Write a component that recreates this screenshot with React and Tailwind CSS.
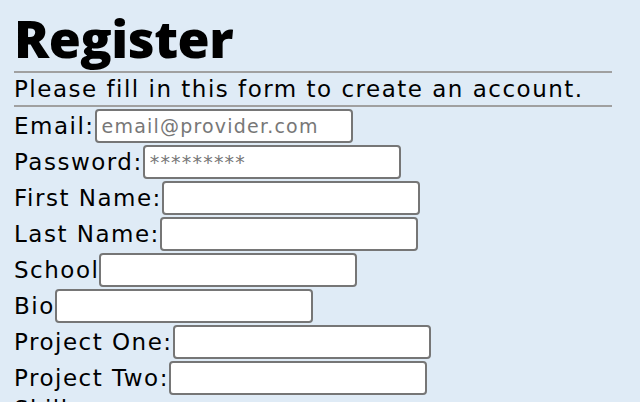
const fields = [
  { label: 'Email:', type: 'email', placeholder: 'email@provider.com' },
  { label: 'Password:', type: 'password', placeholder: '*********' },
  { label: 'First Name:', type: 'text' },
  { label: 'Last Name:', type: 'text' },
  { label: 'School', type: 'text' },
  { label: 'Bio', type: 'text' },
  { label: 'Project One:', type: 'text' },
  { label: 'Project Two:', type: 'text' },
]

const inputClass =
  'h-[34px] w-[258px] rounded-[4px] border-2 border-[#767676] bg-white px-[5px] text-[19px] tracking-[1.2px] placeholder:text-[#777777]'

export default function App() {
  return (
    <div className="min-h-screen bg-[#dfebf6] pl-[14px] pr-[28px] font-['DejaVu_Sans',sans-serif] text-black">
      <h1 className="pt-[10px] font-['Open_Sans',sans-serif] text-[52px] font-extrabold leading-[56px] tracking-[-0.5px]">
        Register
      </h1>
      <hr className="mt-[5px] border-t-2 border-[#a0a0a0]" />
      <p className="text-[23px] leading-[32px] tracking-[1.5px]">Please fill in this form to create an account.</p>
      <hr className="border-t-2 border-[#a0a0a0]" />
      <form className="flex flex-col gap-[2px] pt-[2px]">
        {fields.map((f) => (
          <div key={f.label} className="flex items-center text-[23px] leading-[28px] tracking-[1.5px]">
            <label>{f.label}</label>
            <input type={f.type} placeholder={f.placeholder} className={inputClass} />
          </div>
        ))}
        <div className="flex flex-col text-[23px] leading-[24px] tracking-[1.5px]">
          <label>Skills:</label>
          <textarea rows={3} className="w-[258px] rounded-[4px] border-2 border-[#767676] bg-white px-[5px] text-[19px]" />
        </div>
      </form>
    </div>
  )
}
